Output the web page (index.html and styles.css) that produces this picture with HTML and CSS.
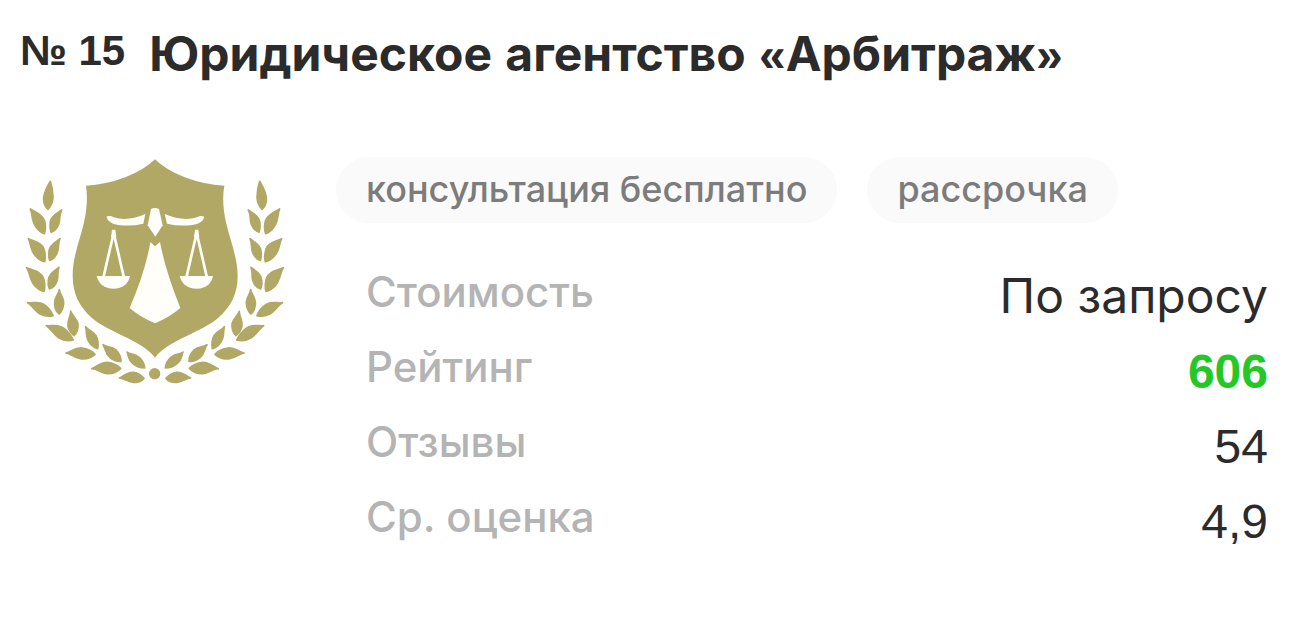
FILE: index.html
```html
<!DOCTYPE html>
<html lang="ru">
<head>
<meta charset="utf-8">
<meta name="viewport" content="width=device-width, initial-scale=1">
<title>Юридическое агентство «Арбитраж»</title>
<link rel="stylesheet" href="styles.css">
</head>
<body>
<article class="card">
  <header class="card-head">
    <span class="place">№ 15</span>
    <h2 class="name">Юридическое<span class="mark"> </span>агентство<span class="mark"> «</span>Арбитраж<span class="mark">»</span></h2>
  </header>
  <div class="card-body">
    <svg class="logo" viewBox="30 24 810 684" role="img" aria-label="Арбитраж">
      <defs>
        <g id="branch" stroke="#b1a866" stroke-width="5" stroke-linejoin="round">
          <path d="M121 97C112 112 98 135 101 155Q104 174 114 181Q128 166 129 145Q129 122 121 97Z"/>
          <path d="M61 180C68 192 63 214 78 234Q89 250 103 254Q109 240 104 216C95 194 76 190 61 180Z"/>
          <path d="M155 183C147 190 124 198 121 218Q118 236 123 250Q138 245 146 226C152 208 146 199 155 183Z"/>
          <path d="M55 269C63 282 60 303 76 320Q89 335 104 338Q109 320 101 298C92 278 72 279 55 269Z"/>
          <path d="M150 269C142 277 118 286 117 307Q115 324 119 334Q134 330 142 310C149 294 142 286 150 269Z"/>
          <path d="M50 356C60 370 58 391 74 410Q87 424 102 427Q107 410 101 389C91 365 69 365 50 356Z"/>
          <path d="M147 355C139 363 116 373 115 393Q113 410 118 420Q135 415 141 396C147 380 140 372 147 355Z"/>
          <path d="M53 461C67 469 74 487 92 496Q111 505 129 500Q121 479 103 467C86 455 68 464 53 461Z"/>
          <path d="M148 422C147 435 132 445 134 466Q135 487 148 495Q161 481 161 460C160 443 150 437 148 422Z"/>
          <path d="M109 530C122 537 128 555 147 567Q168 579 190 573Q180 552 162 538C143 524 126 532 109 530Z"/>
          <path d="M182 487C183 502 171 512 174 532Q178 549 192 560Q206 545 204 525C201 507 187 502 182 487Z"/>
          <path d="M168 612C181 613 191 626 211 629Q237 633 255 616Q241 600 216 597C195 595 183 609 168 612Z"/>
          <path d="M227 533C231 549 226 563 237 579Q248 595 263 599Q267 578 258 560C249 544 235 545 227 533Z"/>
          <path d="M245 659C260 658 271 672 292 674Q316 675 332 658Q316 642 292 640C271 640 259 654 245 659Z"/>
          <path d="M279 587C287 597 284 612 300 626Q316 639 333 637Q333 617 318 603C303 590 290 596 279 587Z"/>
          <path d="M328 687C342 687 350 699 370 700Q390 702 402 688Q389 673 370 670C350 669 341 682 328 687Z"/>
          <path d="M351 609C356 619 354 632 368 643Q384 657 404 657Q402 638 386 624C373 612 361 618 351 609Z"/>
        </g>
        <g id="pan">
          <path fill="none" stroke="#fffef8" stroke-width="8" d="M281 382L311 252L341 382"/>
          <path d="M306 242h10l3 22h-16ZM260 381H360Q352 418 311 419Q269 418 260 381Z"/>
        </g>
      </defs>
      <g fill="#b1a866">
        <path d="M435 31Q466 62 524 85Q583 107 643 110C637 142 639 180 648 220C658 268 682 320 683 380C683 437 661 474 625 506C581 547 467 577 435 626C403 577 289 547 245 506C210 474 188 437 188 380C188 320 212 268 222 220C231 180 233 142 228 110Q287 107 346 85Q404 62 435 31Z"/>
        <use href="#branch"/>
        <use href="#branch" transform="matrix(-1 0 0 1 870 0)"/>
        <circle cx="434" cy="674" r="17"/>
      </g>
      <g fill="#fffef8">
        <path d="M289 203Q299 198 311 205Q354 218 406 195L400 224Q364 233 325 228Q294 223 289 203Z"/>
        <path d="M583 203Q573 198 561 205Q518 218 464 195L471 224Q508 233 547 228Q579 223 583 203Z"/>
        <path d="M423 180Q435 174 447 180L458 229L436 263L413 229Z"/>
        <path d="M421 279L435 292L450 279Q466 365 511 477Q480 504 435 523Q390 504 359 477Q407 365 421 279Z"/>
        <use href="#pan"/>
        <use href="#pan" x="249"/>
      </g>
    </svg>
    <div class="info">
      <ul class="tags">
        <li class="tag">консультация бесплатно</li>
        <li class="tag">рассрочка</li>
      </ul>
      <dl class="facts">
        <div class="fact"><dt>Стоимость</dt><dd>По запросу</dd></div>
        <div class="fact"><dt>Рейтинг</dt><dd class="number rating">606</dd></div>
        <div class="fact"><dt>Отзывы</dt><dd class="number">54</dd></div>
        <div class="fact"><dt>Ср. оценка</dt><dd class="number">4,9</dd></div>
      </dl>
    </div>
  </div>
</article>
</body>
</html>
```
FILE: styles.css
```css
* {
  box-sizing: border-box;
}

body {
  margin: 0;
  background: #fff;
  color: #2b2b2b;
  font-family: Inter, "Liberation Sans", sans-serif;
}

.card {
  padding: 24px 22px 48px 20px;
}

.card-head {
  display: flex;
  align-items: flex-start;
  gap: 24px;
}

.place {
  font: bold 42px/54px "Liberation Sans", sans-serif;
  white-space: nowrap;
}

.name {
  margin: 0;
  font-size: 48px;
  font-weight: 700;
  line-height: 60px;
}

.mark {
  font-family: "Liberation Sans", sans-serif;
  line-height: 1;
}

.card-body {
  display: flex;
  align-items: flex-start;
  gap: 46px;
  margin-top: 73px;
}

.logo {
  flex: none;
  width: 270px;
  height: 228px;
}

.info {
  flex: 1;
  min-width: 0;
}

.tags {
  display: flex;
  flex-wrap: wrap;
  gap: 30px;
  margin: 0;
  padding: 0;
  list-style: none;
}

.tag {
  padding: 0 30px 2px;
  border-radius: 33px;
  background: #fafafa;
  color: #7c7c7c;
  font-size: 36px;
  font-weight: 500;
  line-height: 64px;
}

.facts {
  margin: 32px 0 0;
  padding-left: 30px;
}

.fact {
  display: flex;
  justify-content: space-between;
  height: 75px;
}

.fact dt {
  color: #b4b4b4;
  font-size: 42px;
  font-weight: 500;
  line-height: 73px;
}

.fact dd {
  margin: 0;
  font-size: 48px;
  line-height: 82px;
}

.fact .number {
  font-family: "Liberation Sans", sans-serif;
  line-height: 84px;
}

.fact .rating {
  color: #24c824;
  font-weight: 700;
}
```
